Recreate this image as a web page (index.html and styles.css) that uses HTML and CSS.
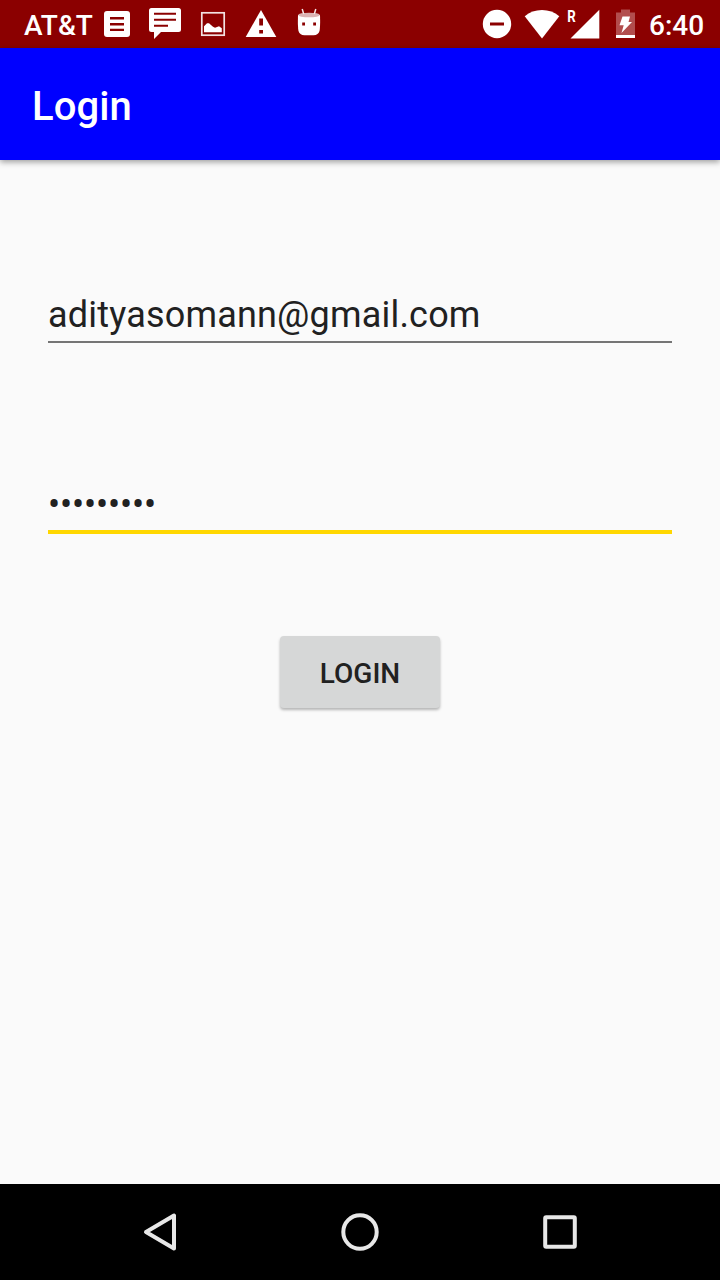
FILE: index.html
```html
<!DOCTYPE html>
<html lang="en">
<head>
<meta charset="utf-8">
<title>Login</title>
<link rel="stylesheet" href="styles.css">
</head>
<body>
<div class="screen">
  <div class="status-bar">
    <span class="carrier">AT&amp;T</span>
    <div class="notifications">
      <svg class="icon" viewBox="0 0 48 48"><rect x="11" y="11" width="26" height="26" rx="3"/><path class="cut" d="M17 17h14v2.400H17zM17 23h14v2.400H17zM17 28.700h14v2.400H17z"/></svg>
      <svg class="icon" viewBox="0 0 48 48"><path d="M10.500 8h27q2.500 0 2.500 2.500v19q0 2.500-2.500 2.500H20l-7 7v-7h-2.500q-2.500 0-2.500-2.500v-19Q8 8 10.500 8z"/><path class="cut" d="M13 12.800h22v2H13zM13 18.800h22v2H13zM13 24.800h14v2H13z"/></svg>
      <svg class="icon" viewBox="0 0 48 48"><rect x="12.800" y="12.800" width="22.400" height="22.400" fill="none" stroke="#f3e2e2" stroke-width="1.700"/><path d="M15 32.300v-6l3-3h2l4 3.500 2 1 4-1.500 2.800 2v4z"/></svg>
      <svg class="icon" viewBox="0 0 48 48"><path d="M24 10l15.300 27H8.700z"/><path class="cut" d="M22.200 18.500h3.800v7h-3.800zM22.200 30h3.800v3.500h-3.800z"/></svg>
      <svg class="icon" viewBox="0 0 48 48"><path d="M13 15h22q.4 12-.5 16-1 4-6 4.300h-9q-5-.3-6-4.300-.9-4-.5-16z"/><ellipse cx="24" cy="15" rx="10.800" ry="2.300" fill="#dcb4b4"/><path d="M17.200 9l1.500 5M30.800 9l-1.500 5" fill="none" stroke="#f5e5e5" stroke-width="1.500"/><path class="cut" d="M17.200 22.500h2.800v3h-2.800zM28.200 22.500H31v3h-2.800z"/></svg>
    </div>
    <div class="system">
      <svg class="icon" viewBox="473 0 48 48"><circle cx="497" cy="24" r="14.200"/><path class="cut" d="M490 22.500h14v3h-14z"/></svg>
      <svg class="icon wifi" viewBox="521 0 42 48"><path d="M542 38.500L524.700 16.200q7.300-6.200 17.300-6.200t17.300 6.200z"/></svg>
      <svg class="icon signal" viewBox="563 0 42 48"><path d="M570.500 38.500L599.300 9.700v28.800z"/><text class="roaming" x="567.300" y="22.300" textLength="8.500" lengthAdjust="spacingAndGlyphs">R</text></svg>
      <svg class="icon battery" viewBox="605 0 42 48"><path d="M616 12.500h5V9.500h9v3h5V35h-19z" fill="#b24d4d"/><path d="M616 35h19v3h-19zM622.500 16.500h7.500l-1.500 5.500h3.500L621.500 33l2.200-7.800h-4.200z"/></svg>
      <span class="clock">6:40</span>
    </div>
  </div>
  <header class="app-bar"><h1 class="title">Login</h1></header>
  <main class="form">
    <div class="field email">adityasomann@gmail.com</div>
    <div class="field password">•••••••••</div>
    <button class="submit">LOGIN</button>
  </main>
  <nav class="nav-bar">
    <svg class="nav-icon" viewBox="0 0 48 48"><path d="M10 24L38 7.500v33z"/></svg>
    <svg class="nav-icon" viewBox="0 0 48 48"><circle cx="24" cy="24" r="16.700"/></svg>
    <svg class="nav-icon" viewBox="0 0 48 48"><rect x="9.200" y="9.200" width="29.600" height="29.600" rx="1"/></svg>
  </nav>
</div>
</body>
</html>
```
FILE: styles.css
```css
* { box-sizing: border-box; }
body { margin: 0; font-family: Roboto, sans-serif; }
.screen {
  width: 720px;
  height: 1280px;
  display: flex;
  flex-direction: column;
  background: #fafafa;
  overflow: hidden;
}
.status-bar {
  height: 48px;
  flex: none;
  display: flex;
  background: #8b0000;
  color: #fff;
  font-size: 28px;
  font-weight: 500;
  line-height: 52px;
}
.carrier { width: 93px; padding-left: 24px; white-space: nowrap; }
.notifications, .system { display: flex; }
.system { margin-left: auto; width: 247px; }
.icon { width: 48px; height: 48px; flex: none; fill: #fff; }
.wifi, .signal, .battery { width: 42px; }
.icon .cut { fill: #8b0000; }
.roaming { font-size: 16px; font-weight: 700; }
.clock { padding-left: 2px; white-space: nowrap; }
.app-bar {
  height: 112px;
  flex: none;
  display: flex;
  align-items: center;
  padding: 4px 32px 0;
  background: #00f;
  color: #fff;
  box-shadow: 0 2px 6px rgba(0, 0, 0, .38);
}
.title { margin: 0; font-size: 40px; font-weight: 500; letter-spacing: .1px; }
.form {
  flex: 1;
  display: flex;
  flex-direction: column;
  padding: 127px 48px 0;
}
.field {
  height: 56px;
  font-size: 36px;
  line-height: 56px;
  color: #212121;
  white-space: nowrap;
}
.email { border-bottom: 2px solid #757575; letter-spacing: .19px; }
.password {
  height: 59px;
  margin-top: 132px;
  border-bottom: 4px solid gold;
  line-height: 60px;
  letter-spacing: -.15px;
}
.submit {
  width: 160px;
  height: 72px;
  margin: 102px auto 0;
  padding: 3px 0 0;
  border: 0;
  border-radius: 4px;
  background: #d6d7d7;
  color: #212121;
  font: 500 28px Roboto, sans-serif;
  box-shadow: 0 2px 3px rgba(0, 0, 0, .28);
}
.nav-bar {
  height: 96px;
  flex: none;
  display: flex;
  justify-content: center;
  align-items: center;
  gap: 152px;
  background: #000;
}
.nav-icon {
  width: 48px;
  height: 48px;
  fill: none;
  stroke: #e8e8e8;
  stroke-width: 4;
  stroke-linejoin: round;
}
```
